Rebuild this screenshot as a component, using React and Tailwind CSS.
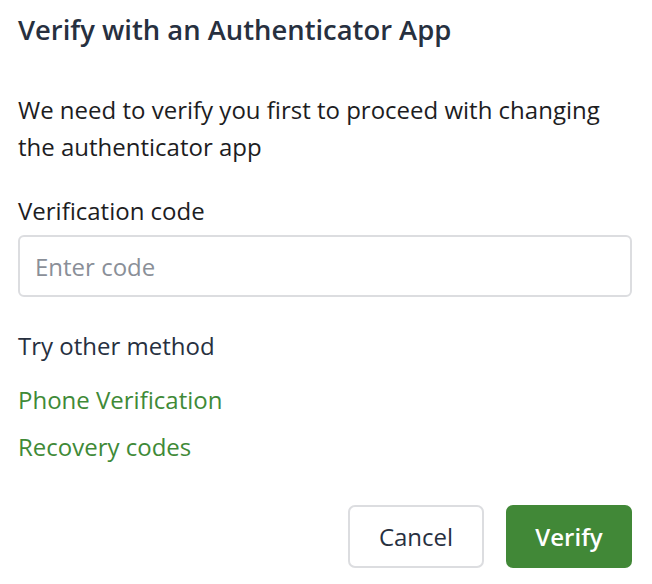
import { useState } from "react";

function App() {
  const [code, setCode] = useState("");

  return (
    <div className="min-h-[584px] w-[652px] bg-white pl-[18px] pr-[20px] font-['Open_Sans','Noto_Sans',sans-serif] text-[#1f2430]">
      <h1 className="pt-[14px] text-[27.4px] font-semibold leading-[32px] text-[#27303f]">
        Verify with an Authenticator App
      </h1>

      <p className="mt-[45px] text-[24px] leading-[37px] text-[#1d1d1f]">
        We need to verify you first to proceed with changing the authenticator app
      </p>

      <label className="mt-[30px] block text-[24px] leading-[32px] text-[#1d1d1f]">
        Verification code
      </label>
      <input
        type="text"
        value={code}
        onChange={(e) => setCode(e.target.value)}
        placeholder="Enter code"
        className="mt-[8px] h-[62px] w-full rounded-[6px] border-2 border-[#dcdde0] px-[15px] text-[24px] outline-none placeholder:text-[#8a8f98]"
      />

      <p className="mt-[33px] text-[24px] leading-[32px] text-[#27303f]">Try other method</p>
      <div className="mt-[22px] flex flex-col gap-[15px] text-[24px] leading-[32px] text-[#3f8a37]">
        <a href="#">Phone Verification</a>
        <a href="#">Recovery codes</a>
      </div>

      <div className="mt-[42px] flex justify-end gap-[22px]">
        <button className="h-[63px] w-[136px] rounded-[7px] border-2 border-[#dcdde0] bg-white text-[24px] text-[#27303f]">
          Cancel
        </button>
        <button className="h-[63px] w-[126px] rounded-[7px] bg-[#418837] text-[24px] font-semibold text-white">
          Verify
        </button>
      </div>
    </div>
  );
}

export default App;
